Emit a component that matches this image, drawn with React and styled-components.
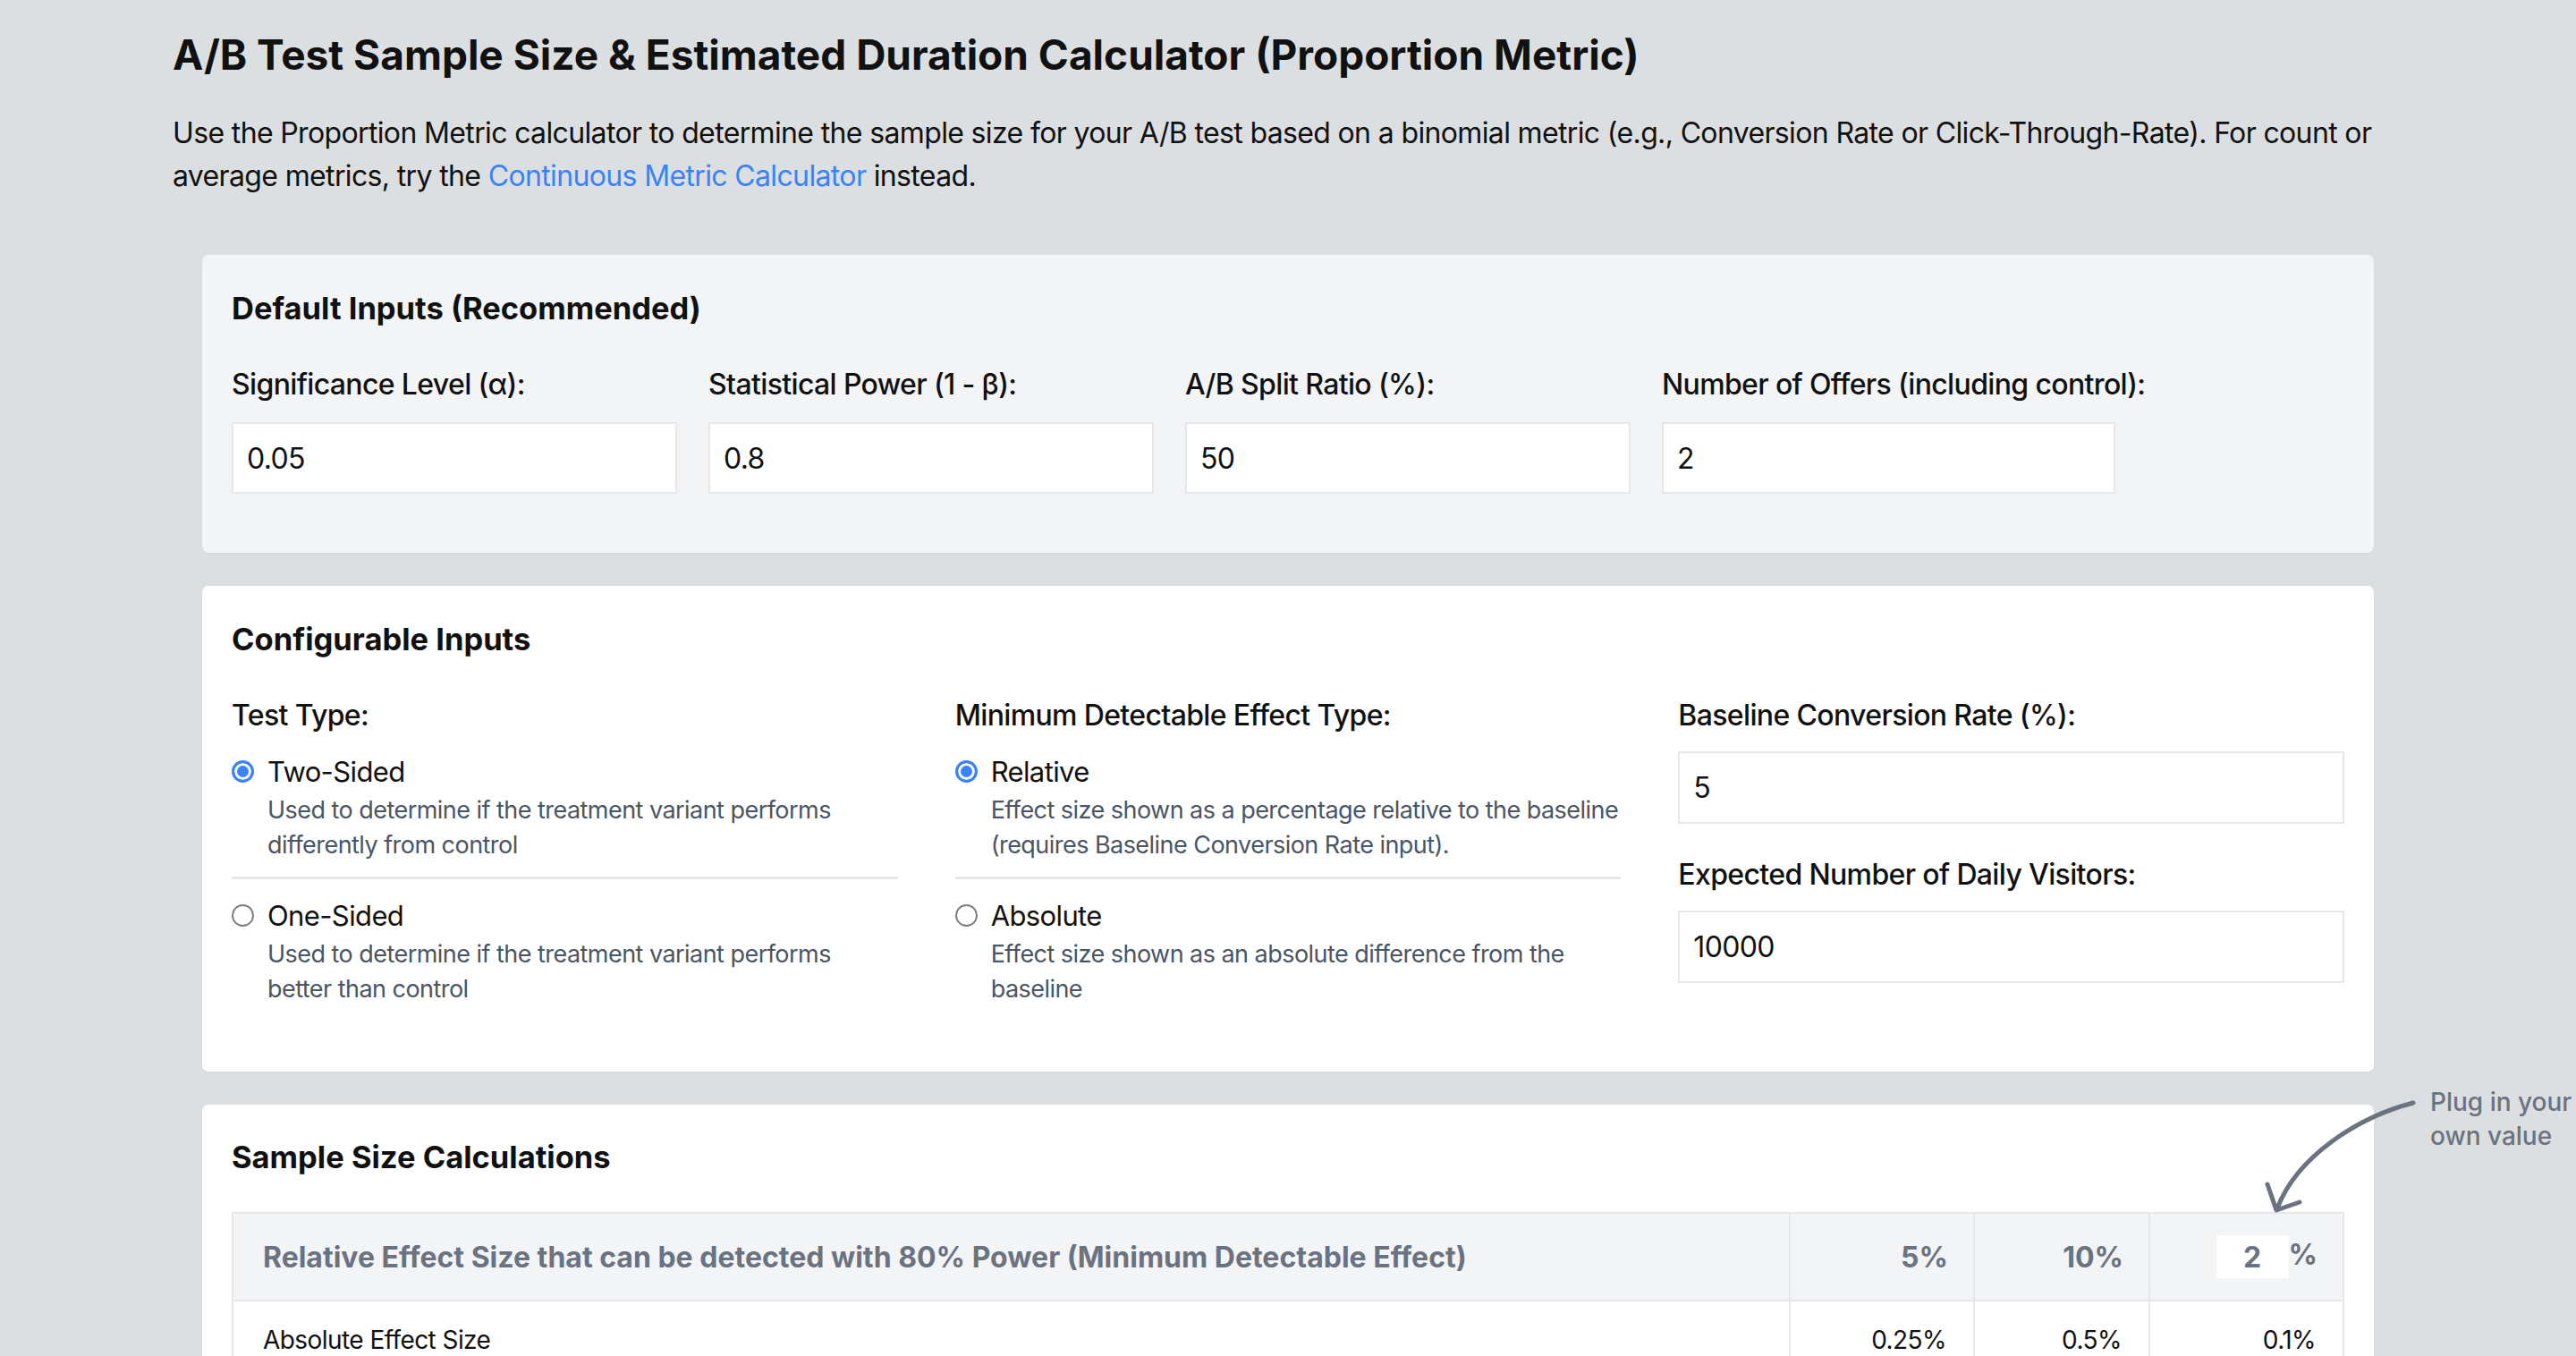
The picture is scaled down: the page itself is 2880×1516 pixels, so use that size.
import React, { useState } from 'react';
import styled, { createGlobalStyle } from 'styled-components';

const GlobalStyle = createGlobalStyle`
  html, body {
    margin: 0;
    padding: 0;
    background: #dcdfe1;
    overflow: hidden;
  }
  body {
    font-family: Inter, "Liberation Sans", sans-serif;
    color: #111;
  }
  * { box-sizing: border-box; }
`;

const Page = styled.div`
  padding: 32px 193px 0;
`;
const Title = styled.h1`
  margin: 0;
  font-size: 46px;
  font-weight: 700;
  line-height: 58px;
`;
const Intro = styled.p`
  margin: 35px 0 0;
  font-size: 32px;
  line-height: 48px;
  letter-spacing: -0.02em;
`;
const Link = styled.a`
  color: #3b82f6;
  text-decoration: none;
`;
const Card = styled.section`
  position: relative;
  margin: ${p => (p.$first ? '64px' : '37px')} 33px 0;
  padding: ${p => p.$pad || '36px 33px 66px'};
  background: ${p => p.$bg || '#fff'};
  border-radius: 7px;
  box-shadow: 0 1px 2px rgba(0, 0, 0, 0.04);
`;
const CardTitle = styled.h2`
  margin: 0 0 37px;
  font-size: 34.5px;
  font-weight: 700;
  line-height: 48px;
`;
const FieldRow = styled.div`
  display: grid;
  grid-template-columns: 498px 498px 498px 507px;
  column-gap: 35px;
`;
const Field = styled.div`
  display: flex;
  flex-direction: column;
  margin-bottom: ${p => p.$spaced ? '33px' : '0'};
`;
const Label = styled.label`
  font-size: 32px;
  font-weight: 500;
  line-height: 48px;
  letter-spacing: -0.02em;
  margin-bottom: ${p => p.$gap || '18px'};
  white-space: nowrap;
`;
const Input = styled.input`
  height: ${p => p.$h || '80px'};
  width: 100%;
  padding: 0 15px;
  border: 2px solid #e5e7eb;
  background: #fff;
  font-family: inherit;
  font-size: 32px;
  letter-spacing: -0.02em;
  color: #111;
  outline: none;
`;
const ConfigGrid = styled.div`
  display: grid;
  grid-template-columns: 1fr 1fr 1fr;
  column-gap: 64px;
`;
const Column = styled.div`
  display: flex;
  flex-direction: column;
`;
const Option = styled.div`
  display: flex;
  flex-direction: column;
  cursor: pointer;
`;
const RadioRow = styled.div`
  display: flex;
  align-items: center;
  gap: 15px;
  height: 48px;
  font-size: 31px;
  letter-spacing: -0.02em;
`;
const Radio = styled.span`
  width: 25px;
  height: 25px;
  border-radius: 50%;
  flex: none;
  border: ${p => p.$on ? '3px solid #3b82f6' : '2px solid #7d7d7d'};
  background: ${p => p.$on ? '#3b82f6' : '#fff'};
  box-shadow: ${p => p.$on ? 'inset 0 0 0 3px #fff' : 'none'};
`;
const Desc = styled.div`
  padding-left: 40px;
  font-size: 27px;
  line-height: 39px;
  letter-spacing: -0.02em;
  color: #4b5563;
`;
const Divider = styled.hr`
  margin: 16px 0;
  border: none;
  border-top: 3px solid #e5e7eb;
`;
const Table = styled.table`
  width: 100%;
  table-layout: fixed;
  border-collapse: collapse;
  border: 2px solid #e5e7eb;
`;
const Th = styled.th`
  height: 98px;
  padding: 0 ${p => p.$left ? '33px' : '28px'} 0 33px;
  background: #f3f4f6;
  border: 2px solid #e5e7eb;
  font-size: 32px;
  font-weight: 700;
  color: #6b7280;
  text-align: ${p => p.$left ? 'left' : 'right'};
  white-space: nowrap;
`;
const Td = styled.td`
  height: 88px;
  padding: 0 ${p => p.$left ? '33px' : '30px'} 0 33px;
  border: 2px solid #e5e7eb;
  font-size: 28px;
  letter-spacing: -0.02em;
  color: #111;
  text-align: ${p => p.$left ? 'left' : 'right'};
`;
const CustomInput = styled.input`
  width: 81px;
  height: 48px;
  border: none;
  background: #fff;
  text-align: center;
  font-family: inherit;
  font-size: 32px;
  font-weight: 700;
  color: #6b7280;
  outline: none;
  vertical-align: middle;
`;
const Note = styled.div`
  position: absolute;
  top: -22px;
  left: calc(100% + 63px);
  font-size: 28px;
  font-weight: 500;
  line-height: 38px;
  color: #6b7280;
  white-space: nowrap;
`;
const Arrow = styled.svg`
  position: absolute;
  top: -30px;
  left: calc(100% - 128px);
  overflow: visible;
`;

const defaults = [
  { label: 'Significance Level (α):', value: '0.05' },
  { label: 'Statistical Power (1 - β):', value: '0.8' },
  { label: 'A/B Split Ratio (%):', value: '50' },
  { label: 'Number of Offers (including control):', value: '2' }
];

const RadioGroup = ({ title, options, value, onChange }) => (
  <Column>
    <Label $gap='14px'>{title}</Label>
    {options.map((opt, i) => (
      <React.Fragment key={opt.name}>
        {i > 0 && <Divider/>}
        <Option onClick={() => onChange(opt.name)}>
          <RadioRow>
            <Radio $on={value === opt.name}/>
            {opt.name}
          </RadioRow>
          <Desc>{opt.desc}</Desc>
        </Option>
      </React.Fragment>
    ))}
  </Column>
);

const App = () => {
  const [testType, setTestType] = useState('Two-Sided');
  const [effectType, setEffectType] = useState('Relative');
  const [custom, setCustom] = useState('2');

  return (
    <Page>
      <GlobalStyle/>
      <Title>A/B Test Sample Size &amp; Estimated Duration Calculator (Proportion Metric)</Title>
      <Intro>
        Use the Proportion Metric calculator to determine the sample size for your A/B test based on a binomial metric (e.g., Conversion Rate or Click-Through-Rate). For count or average metrics, try the <Link href='#'>Continuous Metric Calculator</Link> instead.
      </Intro>

      <Card $first $bg='#f3f4f6'>
        <CardTitle>Default Inputs (Recommended)</CardTitle>
        <FieldRow>
          {defaults.map(d => (
            <Field key={d.label}>
              <Label>{d.label}</Label>
              <Input defaultValue={d.value}/>
            </Field>
          ))}
        </FieldRow>
      </Card>

      <Card $pad='36px 33px 73px'>
        <CardTitle>Configurable Inputs</CardTitle>
        <ConfigGrid>
          <RadioGroup
            title='Test Type:'
            value={testType}
            onChange={setTestType}
            options={[
              { name: 'Two-Sided', desc: 'Used to determine if the treatment variant performs differently from control' },
              { name: 'One-Sided', desc: 'Used to determine if the treatment variant performs better than control' }
            ]}
          />
          <RadioGroup
            title='Minimum Detectable Effect Type:'
            value={effectType}
            onChange={setEffectType}
            options={[
              { name: 'Relative', desc: 'Effect size shown as a percentage relative to the baseline (requires Baseline Conversion Rate input).' },
              { name: 'Absolute', desc: 'Effect size shown as an absolute difference from the baseline' }
            ]}
          />
          <Column>
            <Field $spaced>
              <Label $gap='16px'>Baseline Conversion Rate (%):</Label>
              <Input $h='81px' defaultValue='5'/>
            </Field>
            <Field>
              <Label $gap='16px'>Expected Number of Daily Visitors:</Label>
              <Input $h='81px' defaultValue='10000'/>
            </Field>
          </Column>
        </ConfigGrid>
      </Card>

      <Card $pad='35px 33px 66px'>
        <CardTitle>Sample Size Calculations</CardTitle>
        <Table>
          <colgroup>
            <col/>
            <col style={{ width: 206 }}/>
            <col style={{ width: 196 }}/>
            <col style={{ width: 217 }}/>
          </colgroup>
          <thead>
            <tr>
              <Th $left>Relative Effect Size that can be detected with 80% Power (Minimum Detectable Effect)</Th>
              <Th>5%</Th>
              <Th>10%</Th>
              <Th>
                <CustomInput value={custom} onChange={e => setCustom(e.target.value)}/>%
              </Th>
            </tr>
          </thead>
          <tbody>
            <tr>
              <Td $left>Absolute Effect Size</Td>
              <Td>0.25%</Td>
              <Td>0.5%</Td>
              <Td>0.1%</Td>
            </tr>
            <tr>
              <Td $left>Sample Size per Variant</Td>
              <Td>122,123</Td>
              <Td>31,231</Td>
              <Td>762,657</Td>
            </tr>
          </tbody>
        </Table>
        <Arrow width='180' height='160' viewBox='0 0 180 160'>
          <path d='M172 28 C 110 44, 42 88, 20 146' fill='none' stroke='#6b7280' strokeWidth='5' strokeLinecap='round'/>
          <path d='M9 119 L19 148 L45 139' fill='none' stroke='#6b7280' strokeWidth='5' strokeLinecap='round' strokeLinejoin='round'/>
        </Arrow>
        <Note>Plug in your<br/>own value</Note>
      </Card>
    </Page>
  );
};

export default App;
